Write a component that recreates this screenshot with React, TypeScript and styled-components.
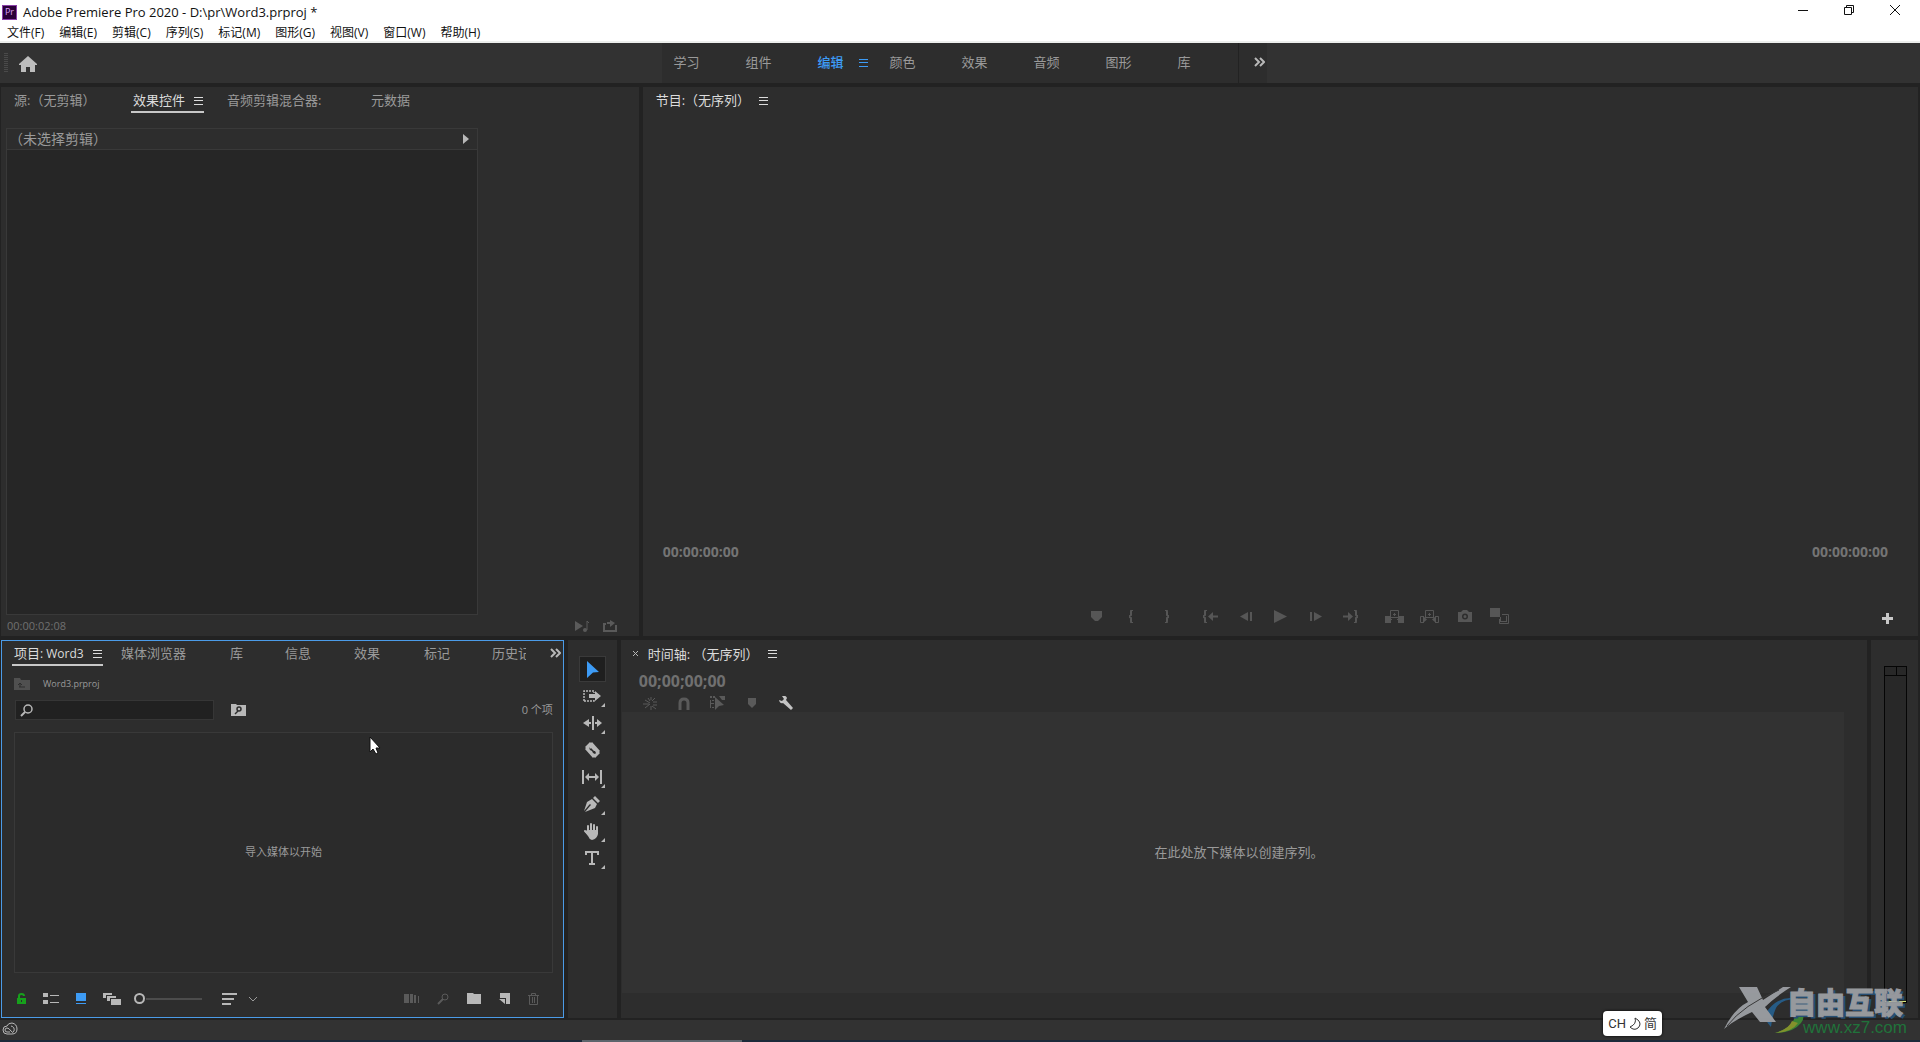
import React from "react";
import styled, { createGlobalStyle, css } from "styled-components";

const c = {
  panel: "#2d2d2d",
  gap: "#222222",
  bar: "#323232",
  line: "#393939",
  text: "#9a9a9a",
  bright: "#dcdcdc",
  icon: "#b8b8b8",
  dim: "#5a5a5a",
  blue: "#3d9bf5",
};

const GlobalStyle = createGlobalStyle`
  * { box-sizing: border-box; }
  body { margin: 0; background: ${c.gap}; overflow: hidden; }
  body, button, input { font-family: "Open Sans", "Noto Sans CJK SC", sans-serif; }
  button { border: 0; padding: 0; background: none; color: inherit; font-size: inherit; line-height: inherit; }
  svg { display: block; flex: none; }
`;

const Window = styled.div`
  display: flex;
  flex-direction: column;
  height: 100vh;
  color: ${c.text};
  font-size: 13px;
  line-height: 20px;
`;

/* ---------- window chrome ---------- */
const Chrome = styled.header`
  flex: none;
  background: #fff;
  color: #111;
  border-bottom: 2px solid #eceeec;
`;
const TitleBar = styled.div`
  display: flex;
  align-items: center;
  height: 24px;
  padding: 0 2px;
  gap: 6px;
`;
const AppBadge = styled.span`
  display: grid;
  place-items: center;
  width: 15px;
  height: 15px;
  background: #2a0038;
  border: 1px solid #8a3fa8;
  color: #d9a0f5;
  font-size: 9px;
  line-height: 12px;
`;
const Title = styled.h1`
  margin: 0;
  flex: 1;
  font-size: 13px;
  font-weight: 400;
  line-height: 20px;
`;
const WindowButtons = styled.div`
  display: flex;
  margin-top: -4px;
`;
const WindowButton = styled.button`
  display: grid;
  place-items: center;
  width: 46px;
  height: 20px;
`;
const MenuBar = styled.nav`
  display: flex;
  gap: 15px;
  height: 17px;
  padding-left: 7px;
  font-size: 12px;
  line-height: 17px;
`;
const MenuItem = styled.button`
  white-space: nowrap;
`;

/* ---------- workspace bar ---------- */
const WorkspaceBar = styled.div`
  display: flex;
  flex: none;
  align-items: stretch;
  height: 40px;
  background: ${c.bar};
`;
const HomeArea = styled.div`
  display: flex;
  align-items: center;
  flex: 660 1 0;
  gap: 11px;
  padding-left: 4px;
`;
const Grip = styled.span`
  width: 4px;
  height: 20px;
  background: repeating-linear-gradient(#4a4a4a 0 1px, transparent 1px 2px);
`;
const HomeButton = styled.button`
  padding-top: 1px;
`;
const Workspaces = styled.div`
  display: flex;
  flex: none;
  padding-left: 12px;
  background: ${c.panel};
`;
const Workspace = styled.button<{ $active?: boolean; $width?: number }>`
  display: flex;
  align-items: center;
  gap: 15px;
  width: ${(p) => p.$width || 72}px;
  height: 38px;
  color: ${(p) => (p.$active ? c.blue : c.text)};
  font-weight: ${(p) => (p.$active ? 500 : 400)};
`;
const MoreWorkspaces = styled.button`
  display: grid;
  place-items: center;
  width: 29px;
  height: 40px;
  padding: 0 0 2px 14px;
  border-left: 1px solid ${c.gap};
  color: ${c.icon};
`;
const BarRest = styled.div`
  flex: 656 1 0;
`;

/* ---------- panels ---------- */
const Main = styled.main`
  display: grid;
  flex: 1;
  min-height: 0;
  grid-template-rows: minmax(0, 16fr) minmax(0, 11fr);
  gap: 4px;
  padding: 4px 2px 2px 1px;
`;
const TopRow = styled.div`
  display: grid;
  min-height: 0;
  grid-template-columns: minmax(0, 1fr) minmax(0, 2fr);
  gap: 4px;
`;
const BottomRow = styled.div`
  display: grid;
  min-height: 0;
  grid-template-columns: minmax(0, 14fr) 49px minmax(0, 31fr) 47px;
  gap: 4px;
`;
const Panel = styled.section<{ $focused?: boolean }>`
  display: flex;
  flex-direction: column;
  min-width: 0;
  min-height: 0;
  background: ${c.panel};
  ${(p) =>
    p.$focused &&
    css`
      outline: 1px solid #4b9be8;
      outline-offset: -1px;
    `}
`;
const TabBar = styled.div`
  display: flex;
  flex: none;
  height: 26px;
  padding-left: 11px;
`;
const TabList = styled.div`
  display: flex;
  flex: 1;
  min-width: 0;
  overflow: hidden;
`;
const TabSlot = styled.div<{ $width?: number }>`
  flex: none;
  width: ${(p) => (p.$width ? `${p.$width}px` : "auto")};
`;
const TabButton = styled.button<{ $active?: boolean; $underline?: boolean }>`
  display: flex;
  align-items: center;
  gap: 9px;
  height: 26px;
  padding: 2px 1px 0 2px;
  border-bottom: 2px solid ${(p) => (p.$underline ? "#c8c8c8" : "transparent")};
  color: ${(p) => (p.$active ? c.bright : c.text)};
  white-space: nowrap;
`;
const Latin = styled.span`
  font-size: 12px;
`;
const MoreTabs = styled.button`
  width: 38px;
  padding: 0 4px 0 24px;
  color: ${c.icon};
`;

/* effect controls */
const EffectBox = styled.div`
  display: flex;
  flex: 1;
  flex-direction: column;
  width: 74%;
  margin: 15px 0 0 5px;
  border: 1px solid ${c.line};
  background: #262626;
`;
const EffectHeader = styled.div`
  display: flex;
  align-items: center;
  justify-content: space-between;
  height: 21px;
  padding: 0 8px 0 2px;
  border-bottom: 1px solid ${c.line};
  background: ${c.panel};
  font-size: 14px;
`;
const EffectFooter = styled.div`
  display: flex;
  align-items: center;
  height: 21px;
  padding: 1px 22px 0 6px;
  gap: 14px;
  color: #707070;
  font-size: 11px;
`;
const Fill = styled.span`
  flex: 1;
`;
const IconButton = styled.button<{ $tone?: string }>`
  display: grid;
  flex: none;
  place-items: center;
  color: ${(p) => p.$tone || c.icon};
`;

/* program monitor */
const Timecodes = styled.div`
  display: flex;
  justify-content: space-between;
  margin-top: auto;
  padding: 0 30px 0 20px;
  color: #747474;
  font-size: 14px;
  font-weight: 700;
`;
const Transport = styled.div`
  display: grid;
  grid-template-columns: 1fr auto 1fr;
  align-items: center;
  height: 20px;
  margin: 44px 0 10px;
  padding-left: 36px;
  color: #565656;
`;
const TransportGroups = styled.div`
  display: flex;
  grid-column: 2;
  gap: 9px;
  padding-bottom: 2px;
`;
const TransportGroup = styled.div`
  display: flex;
`;
const TransportButton = styled.button`
  display: grid;
  place-items: center;
  width: 35px;
  height: 20px;
`;
const AddButton = styled.button`
  justify-self: end;
  padding: 2px 25px 0 0;
  color: #c8c8c8;
`;

/* project */
const PathRow = styled.div`
  display: flex;
  align-items: center;
  height: 20px;
  gap: 13px;
  margin-top: 8px;
  padding-left: 13px;
  font-size: 9px;
`;
const SearchRow = styled.div`
  display: flex;
  align-items: center;
  height: 20px;
  margin-top: 6px;
  padding: 0 11px 0 14px;
  font-size: 11px;
`;
const SearchBox = styled.label`
  display: flex;
  align-items: center;
  gap: 6px;
  width: 199px;
  height: 20px;
  margin-right: 17px;
  padding-left: 4px;
  border: 1px solid #363636;
  background: #212121;
  color: ${c.icon};
`;
const SearchInput = styled.input`
  flex: 1;
  min-width: 0;
  border: 0;
  outline: 0;
  background: transparent;
  color: ${c.bright};
  font-size: 12px;
`;
const MediaArea = styled.div`
  display: grid;
  flex: 1;
  place-items: center;
  margin: 12px 11px 0 13px;
  padding-bottom: 2px;
  border: 1px solid ${c.line};
  background: #2b2b2b;
  font-size: 11px;
`;
const ProjectFooter = styled.div`
  display: flex;
  flex: none;
  align-items: center;
  justify-content: space-between;
  height: 45px;
  padding: 7px 25px 0 15px;
`;
const FooterGroup = styled.div<{ $gap: number }>`
  display: flex;
  align-items: center;
  gap: ${(p) => p.$gap}px;
`;
const ZoomSlider = styled.input`
  width: 70px;
  height: 12px;
  margin: 0;
  appearance: none;
  background: linear-gradient(#4c4c4c, #4c4c4c) 12px 5px / 56px 2px no-repeat;
  &::-webkit-slider-thumb {
    appearance: none;
    width: 11px;
    height: 11px;
    border: 2px solid ${c.icon};
    border-radius: 50%;
    background: ${c.panel};
  }
`;

/* tools */
const ToolList = styled.div`
  display: flex;
  flex-direction: column;
  align-items: center;
  gap: 1px;
  padding-top: 16px;
`;
const ToolButton = styled.button<{ $active?: boolean; $more?: boolean }>`
  position: relative;
  display: grid;
  place-items: center;
  width: 27px;
  height: 26px;
  color: ${(p) => (p.$active ? c.blue : c.icon)};
  background: ${(p) => (p.$active ? "#1f1f1f" : "transparent")};
  border: 1px solid ${(p) => (p.$active ? "#3a3a3a" : "transparent")};
  ${(p) =>
    p.$more &&
    css`
      &::after {
        content: "";
        position: absolute;
        right: 0;
        bottom: 1px;
        border: 2px solid;
        border-color: transparent ${c.icon} ${c.icon} transparent;
      }
    `}
`;

/* timeline */
const TimelineHead = styled.div`
  display: flex;
  align-items: center;
  height: 26px;
  padding: 1px 0 0 11px;
  gap: 9px;
  color: ${c.bright};
`;
const TimelineCode = styled.div`
  height: 30px;
  padding-left: 18px;
  color: #707070;
  font-size: 16px;
  font-weight: 700;
  line-height: 30px;
`;
const TimelineTools = styled.div`
  display: flex;
  gap: 18px;
  height: 14px;
  padding-left: 21px;
`;
const TimelineTool = styled.button<{ $on?: boolean }>`
  display: grid;
  place-items: center;
  width: 16px;
  height: 14px;
  color: ${(p) => (p.$on ? "#c4c4c4" : c.dim)};
`;
const DropArea = styled.div`
  display: grid;
  flex: 1;
  place-items: center;
  margin: 2px 23px 25px 1px;
  padding: 0 0 2px 12px;
  background: ${c.bar};
`;

/* meters */
const Meter = styled.div`
  display: flex;
  flex: 1;
  flex-direction: column;
  margin: 26px 11px 15px 13px;
  border: 1px solid #050505;
  background: #282828;
`;
const MeterClip = styled.div`
  display: grid;
  grid-template-columns: 1fr 1fr;
  height: 9px;
  border-bottom: 1px solid #050505;
`;
const ClipLamp = styled.span`
  & + & {
    border-left: 1px solid #050505;
  }
`;
const MeterFloor = styled.span`
  height: 1px;
  margin-top: auto;
  background: #d8e878;
`;

/* status bar */
const StatusBar = styled.footer`
  flex: none;
  height: 22px;
  padding: 2px 0 0 2px;
  background: ${c.bar};
  border-bottom: 2px solid #1c2a3a;
  color: ${c.icon};
`;
const TaskIndicator = styled.span`
  position: absolute;
  left: 582px;
  bottom: 0;
  width: 160px;
  height: 2px;
  background: #5c656c;
`;

/* overlays */
const Pointer = styled.div`
  position: absolute;
  left: 369px;
  top: 736px;
`;
const ImeBadge = styled.div`
  position: absolute;
  right: 258px;
  bottom: 6px;
  display: flex;
  align-items: center;
  gap: 3px;
  height: 25px;
  padding: 0 5px;
  border-radius: 4px;
  background: #fff;
  box-shadow: 0 0 3px #000;
  color: #333;
  font-family: Roboto, "Noto Sans CJK SC", sans-serif;
  font-size: 13px;
`;
const Watermark = styled.div`
  position: absolute;
  right: 13px;
  bottom: 6px;
  display: flex;
  align-items: center;
  opacity: 0.9;
`;
const WatermarkMark = styled.div`
  margin-right: -20px;
`;
const WatermarkText = styled.div`
  display: flex;
  flex-direction: column;
  align-items: flex-end;
`;
const WatermarkName = styled.span`
  padding-right: 4px;
  color: #a2a5aa;
  font-family: "Noto Sans CJK SC", sans-serif;
  font-size: 29px;
  font-weight: 900;
  line-height: 36px;
  -webkit-text-stroke: 1px #a2a5aa;
  text-shadow: 3px 2px 0 #26527a;
`;
const WatermarkUrl = styled.span`
  color: #1f7a3c;
  font-family: "Liberation Sans", sans-serif;
  font-size: 17px;
  line-height: 17px;
`;

/* ---------- icons ---------- */
type IconProps = { w: number; h: number; children: React.ReactNode };
const Icon = ({ w, h, children }: IconProps) => (
  <svg width={w} height={h} viewBox={`0 0 ${w} ${h}`} fill="currentColor" aria-hidden="true">
    {children}
  </svg>
);
const stroke = (width = 1) => ({ fill: "none", stroke: "currentColor", strokeWidth: width });

const MenuLines = () => (
  <Icon w={9} h={9}>
    <path d="M0 1h9v1H0zM0 4h9v1H0zM0 8h9v1H0z" />
  </Icon>
);
const Chevrons = () => (
  <Icon w={11} h={10}>
    <path d="M1 1l4 4-4 4M6 1l4 4-4 4" {...stroke(2)} />
  </Icon>
);
const brace = "M4 0H3Q2 0 2 2v3L0 6.500 2 8v3q0 2 1 2h1";

const transport: { label: string; icon: React.ReactNode }[][] = [
  [
    { label: "添加标记", icon: <Icon w={11} h={12}><path d="M0 1h11v6l-4 4H4L0 7z" /></Icon> },
    { label: "标记入点", icon: <Icon w={5} h={13}><path d={brace} {...stroke(2)} /></Icon> },
    { label: "标记出点", icon: <Icon w={5} h={13}><path d="M1 0h1q1 0 1 2v3l2 1.500L3 8v3q0 2-1 2H1" {...stroke(2)} /></Icon> },
  ],
  [
    { label: "转到入点", icon: <Icon w={15} h={13}><path d={brace} {...stroke(2)} /><path d="M5 6.500L10 2v3.500h5v2h-5V11z" /></Icon> },
    { label: "后退一帧", icon: <Icon w={12} h={11}><path d="M0 5.500L8 1v9zM10 1h2v9h-2z" /></Icon> },
    { label: "播放", icon: <Icon w={13} h={13}><path d="M0 0l13 6.500L0 13z" /></Icon> },
    { label: "前进一帧", icon: <Icon w={12} h={11}><path d="M12 5.500L4 1v9zM0 1h2v9H0z" /></Icon> },
    { label: "转到出点", icon: <Icon w={15} h={13}><path d="M11 0h1q1 0 1 2v3l2 1.500L13 8v3q0 2-1 2h-1" {...stroke(2)} /><path d="M10 6.500L5 2v3.500H0v2h5V11z" /></Icon> },
  ],
  [
    { label: "提升", icon: <Icon w={19} h={13}><path d="M0 6h6v7H0zM13 6h6v7h-6zM5 9h2v1H5zM12 9h2v1h-2zM8 4h3v1H8zM9 3h1v3H9z" /><path d="M5.500 8V.5h8V8M6 7.500h7" {...stroke()} /></Icon> },
    { label: "提取", icon: <Icon w={19} h={13}><path d="M4 6.500H.5v6H4M15 6.500h3.500v6H15M5.500 8V.5h8V8M6 7.500h7" {...stroke()} /><path d="M3 6l4 3.500L3 13zM16 6l-4 3.500 4 3.500zM8 4h3v1H8zM9 3h1v3H9z" /></Icon> },
    { label: "导出帧", icon: <Icon w={14} h={12}><path fillRule="evenodd" d="M0 2h3l2-2h4l2 2h3v10H0zM7 3.500a3 3 0 100 6 3 3 0 000-6zM7 5a1.500 1.500 0 110 3 1.500 1.500 0 010-3z" /></Icon> },
    { label: "比较视图", icon: <Icon w={19} h={16}><path d="M0 0h10v9H0z" /><path d="M12 6.500h6.500v9h-9V11" {...stroke()} /><path d="M10 9h1v5H9v-3h1zM11 13h6v1h-6zM16 8h1v5h-1z" /></Icon> },
  ],
];

const tools: { label: string; more?: boolean; icon: React.ReactNode }[] = [
  { label: "选择工具", icon: <Icon w={13} h={17}><path d="M1 0l12 11-6 .500L1 17z" /></Icon> },
  { label: "向前选择轨道工具", more: true, icon: <Icon w={18} h={12}><path d="M1 11V1h10v2M1 11h10V9" {...stroke(1.5)} strokeDasharray="2 1" /><path d="M6 4h6V1l6 5-6 5V8H6z" /></Icon> },
  { label: "波纹编辑工具", more: true, icon: <Icon w={19} h={14}><path d="M9 0h2v14H9zM0 7l6-4v3h2v2H6v3zM19 7l-5-4v3h-2v2h2v3z" /></Icon> },
  { label: "剃刀工具", icon: <Icon w={16} h={16}><path fillRule="evenodd" d="M6 0l1 1 1-1 8 9-1 1 1 1-5 5-1-1-1 1-8-9 1-1-1-1zM5 5l1 2 1-1 3 3 1 0 1 2-1 1-2-1-1-2-2-1-1-2z" /></Icon> },
  { label: "外滑工具", more: true, icon: <Icon w={20} h={14}><path d="M0 0h2v14H0zM18 0h2v14h-2zM3 7l4-4v3h6V3l4 4-4 4V8H7v3z" /></Icon> },
  { label: "钢笔工具", more: true, icon: <Icon w={16} h={16}><path d="M11 0l5 5-2 2-5-5zM8 3l5 5-2 4-10 4 5-6 1-1-1-1-1 1-5 6 3-9z" /></Icon> },
  { label: "手形工具", more: true, icon: <Icon w={16} h={17}><path d="M4 9V3M7 8V1M10 8V2M13 9V4M1 8l4 4" {...stroke(2)} strokeLinecap="round" /><path d="M3 7h11v4q-1 5-6 6-3-1-4-4L1 9z" /></Icon> },
  { label: "文字工具", more: true, icon: <Icon w={14} h={14}><path d="M0 0h14v4h-2V2H8v10h2v2H4v-2h2V2H2v2H0z" /></Icon> },
];

const menus = ["文件(F)", "编辑(E)", "剪辑(C)", "序列(S)", "标记(M)", "图形(G)", "视图(V)", "窗口(W)", "帮助(H)"];
const workspaces = ["学习", "组件", "编辑", "颜色", "效果", "音频", "图形"];

type TabDef = { label: string; latin?: string; width?: number; active?: boolean };
const sourceTabs: TabDef[] = [
  { label: "源:（无剪辑）", width: 119 },
  { label: "效果控件", width: 94, active: true },
  { label: "音频剪辑混合器:", width: 144 },
  { label: "元数据" },
];
const projectTabs: TabDef[] = [
  { label: "项目", latin: ": Word3", width: 107, active: true },
  { label: "媒体浏览器", width: 109 },
  { label: "库", width: 55 },
  { label: "信息", width: 69 },
  { label: "效果", width: 70 },
  { label: "标记", width: 68 },
  { label: "历史记录" },
];

const Tabs = ({ tabs }: { tabs: TabDef[] }) => (
  <TabList>
    {tabs.map((t) => (
      <TabSlot key={t.label} $width={t.width}>
        <TabButton $active={t.active} $underline={t.active}>
          <span>
            {t.label}
            {t.latin && <Latin>{t.latin}</Latin>}
          </span>
          {t.active && <MenuLines />}
        </TabButton>
      </TabSlot>
    ))}
  </TabList>
);

export default function App() {
  return (
    <Window>
      <GlobalStyle />
      <Chrome>
        <TitleBar>
          <AppBadge>Pr</AppBadge>
          <Title>Adobe Premiere Pro 2020 - D:\pr\Word3.prproj *</Title>
          <WindowButtons>
            <WindowButton aria-label="最小化"><Icon w={10} h={10}><path d="M0 5h10v1H0z" /></Icon></WindowButton>
            <WindowButton aria-label="还原"><Icon w={10} h={10}><path d="M.5 2.500h7v7h-7zM2.500 2.500v-2h7v7h-2" {...stroke()} /></Icon></WindowButton>
            <WindowButton aria-label="关闭"><Icon w={10} h={10}><path d="M0 0l10 10M10 0L0 10" {...stroke()} /></Icon></WindowButton>
          </WindowButtons>
        </TitleBar>
        <MenuBar>
          {menus.map((m) => <MenuItem key={m}>{m}</MenuItem>)}
        </MenuBar>
      </Chrome>

      <WorkspaceBar>
        <HomeArea>
          <Grip />
          <HomeButton aria-label="主页">
            <Icon w={18} h={16}><path d="M9 0l9 8v1h-2v7h-5v-5H7v5H2V9H0V8z" fill="#bdbdbd" /></Icon>
          </HomeButton>
        </HomeArea>
        <Workspaces>
          {workspaces.map((w) => (
            <Workspace key={w} $active={w === "编辑"}>
              {w}
              {w === "编辑" && <MenuLines />}
            </Workspace>
          ))}
          <Workspace $width={60}>库</Workspace>
          <MoreWorkspaces aria-label="更多工作区"><Chevrons /></MoreWorkspaces>
        </Workspaces>
        <BarRest />
      </WorkspaceBar>

      <Main>
        <TopRow>
          <Panel>
            <TabBar><Tabs tabs={sourceTabs} /></TabBar>
            <EffectBox>
              <EffectHeader>
                （未选择剪辑）
                <IconButton aria-label="显示时间轴"><Icon w={6} h={10}><path d="M0 0l6 5-6 5z" /></Icon></IconButton>
              </EffectHeader>
            </EffectBox>
            <EffectFooter>
              00:00:02:08
              <Fill />
              <IconButton $tone={c.dim} aria-label="仅播放音频"><Icon w={14} h={12}><path d="M0 1l8 5-8 5z" /><path d="M12 10V1l2 2" {...stroke()} /><circle cx="10" cy="10" r="2" /></Icon></IconButton>
              <IconButton $tone={c.dim} aria-label="循环播放"><Icon w={14} h={12}><path d="M3 4H1v7h12V5M4 3h4" {...stroke(2)} /><path d="M7 0l5 3-5 4z" /></Icon></IconButton>
            </EffectFooter>
          </Panel>

          <Panel>
            <TabBar>
              <TabButton $active>节目:（无序列）<MenuLines /></TabButton>
            </TabBar>
            <Timecodes><span>00:00:00:00</span><span>00:00:00:00</span></Timecodes>
            <Transport>
              <TransportGroups>
                {transport.map((group, i) => (
                  <TransportGroup key={i}>
                    {group.map((b) => <TransportButton key={b.label} aria-label={b.label}>{b.icon}</TransportButton>)}
                  </TransportGroup>
                ))}
              </TransportGroups>
              <AddButton aria-label="按钮编辑器"><Icon w={11} h={11}><path d="M4 0h3v4h4v3H7v4H4V7H0V4h4z" /></Icon></AddButton>
            </Transport>
          </Panel>
        </TopRow>

        <BottomRow>
          <Panel $focused>
            <TabBar>
              <Tabs tabs={projectTabs} />
              <MoreTabs aria-label="更多面板"><Chevrons /></MoreTabs>
            </TabBar>
            <PathRow>
              <Icon w={16} h={12}><path d="M0 0h6l1 2h9v10H0z" fill="#505050" /><path d="M5 9h6M6 9V5M4 7l2-2 2 2" fill="none" stroke="#2d2d2d" /></Icon>
              Word3.prproj
            </PathRow>
            <SearchRow>
              <SearchBox>
                <Icon w={13} h={13}><circle cx="8" cy="5" r="4" {...stroke(1.5)} /><path d="M5 8l-4 4" {...stroke(2)} /></Icon>
                <SearchInput aria-label="搜索项目" />
              </SearchBox>
              <IconButton aria-label="从查询创建新的搜索素材箱">
                <Icon w={15} h={12}><path d="M0 0h5l1 1h9v11H0z" /><circle cx="8" cy="5" r="2" fill="none" stroke="#2d2d2d" strokeWidth="1.500" /><path d="M7 7l-3 3" stroke="#2d2d2d" strokeWidth="1.500" /></Icon>
              </IconButton>
              <Fill />
              0 个项
            </SearchRow>
            <MediaArea>导入媒体以开始</MediaArea>
            <ProjectFooter>
              <FooterGroup $gap={17}>
                <IconButton $tone="#17a01c" aria-label="项目可写"><Icon w={10} h={11}><path fillRule="evenodd" d="M1 5h9v6H1zM5 7h1v2H5z" /><path d="M3 5V3q0-2 2.500-2T8 3" {...stroke(2)} /></Icon></IconButton>
                <IconButton aria-label="列表视图"><Icon w={16} h={11}><path d="M0 0h5v4H0zM0 7h5v4H0zM7 2h9v1H7zM7 9h9v1H7z" /></Icon></IconButton>
                <IconButton $tone={c.blue} aria-label="图标视图"><Icon w={10} h={11}><path d="M0 0h10v8H0zM0 10h10v1H0z" /></Icon></IconButton>
                <FooterGroup $gap={13}>
                  <IconButton aria-label="自由变换视图"><Icon w={18} h={12}><path d="M0 0h9v2H3v3H0zM4 3h9v2H7v3H4zM8 6h10v6H8z" /></Icon></IconButton>
                  <FooterGroup $gap={18}>
                    <ZoomSlider type="range" min={0} max={100} defaultValue={0} aria-label="缩放" />
                    <FooterGroup $gap={12}>
                      <IconButton aria-label="排序图标"><Icon w={15} h={12}><path d="M0 0h15v2H0zM0 5h12v2H0zM0 10h9v2H0z" /></Icon></IconButton>
                      <Icon w={8} h={6}><path d="M0 1l4 4 4-4" {...stroke()} /></Icon>
                    </FooterGroup>
                  </FooterGroup>
                </FooterGroup>
              </FooterGroup>
              <FooterGroup $gap={18}>
                <IconButton $tone={c.dim} aria-label="自动匹配序列"><Icon w={15} h={9}><path d="M0 0h5v9H0zM6 0h3v9H6zM10 1h2v8h-2zM14 2h1v7h-1z" /></Icon></IconButton>
                <IconButton $tone={c.dim} aria-label="查找"><Icon w={12} h={12}><circle cx="8" cy="4" r="3" {...stroke(1)} /><path d="M6 6l-5 5" {...stroke(2)} /></Icon></IconButton>
                <IconButton aria-label="新建素材箱"><Icon w={14} h={11}><path d="M0 0h6l1 1h7v10H0z" /></Icon></IconButton>
                <IconButton aria-label="新建项"><Icon w={11} h={11}><path d="M1 0h10v11H7V5H1zM0 6h6v5z" /></Icon></IconButton>
                <IconButton $tone={c.dim} aria-label="清除"><Icon w={11} h={12}><path d="M0 2.500h11M3.500 2V.5h4V2M1.500 3v8.500h8V3M4.500 4v6M6.500 4v6" {...stroke()} /></Icon></IconButton>
              </FooterGroup>
            </ProjectFooter>
          </Panel>

          <Panel>
            <ToolList>
              {tools.map((t, i) => (
                <ToolButton key={t.label} aria-label={t.label} $active={i === 0} $more={t.more}>{t.icon}</ToolButton>
              ))}
            </ToolList>
          </Panel>

          <Panel>
            <TimelineHead>
              <IconButton aria-label="关闭面板"><Icon w={7} h={7}><path d="M1 1l5 5M6 1L1 6" {...stroke()} /></Icon></IconButton>
              <span>时间轴: （无序列）</span>
              <IconButton $tone={c.bright} aria-label="面板菜单"><MenuLines /></IconButton>
            </TimelineHead>
            <TimelineCode>00;00;00;00</TimelineCode>
            <TimelineTools>
              <TimelineTool aria-label="嵌套序列"><Icon w={14} h={14}><path d="M0 8h6M2 4l5 3M2 12l5-4M8 1v3M8 10v4M10 6h4M10 9h4M5 2l2 3M12 2l-3 3M9 10l4 3" {...stroke()} /></Icon></TimelineTool>
              <TimelineTool aria-label="对齐"><Icon w={12} h={13}><path d="M2 13V6q0-4 4-4t4 4v7" {...stroke(3)} /></Icon></TimelineTool>
              <TimelineTool aria-label="链接选择项"><Icon w={15} h={14}><path d="M0 0h2v2H0zM3 0h2v2H3zM0 4h1v8H0zM2 4h2v1H2zM2 11h2v1H2zM0 7h4v1H0zM9 0h6v4h-3zM5 1l9 8-5 1-4 4z" /></Icon></TimelineTool>
              <TimelineTool aria-label="添加标记"><Icon w={8} h={10}><path d="M0 0h8v6l-4 4-4-4z" /></Icon></TimelineTool>
              <TimelineTool $on aria-label="时间轴显示设置"><Icon w={14} h={14}><path d="M3 0q4-1 5 2l-1 2 7 8-2 2-8-7q-3 1-4-3l3 1 2-2z" /></Icon></TimelineTool>
            </TimelineTools>
            <DropArea>在此处放下媒体以创建序列。</DropArea>
          </Panel>

          <Panel>
            <Meter>
              <MeterClip><ClipLamp /><ClipLamp /></MeterClip>
              <MeterFloor />
            </Meter>
          </Panel>
        </BottomRow>
      </Main>

      <StatusBar>
        <Icon w={16} h={13}>
          <path d="M5 12q-4 0-4-4t4-4q1-3 5-3 5 1 5 6 0 5-5 5z" {...stroke()} />
          <path d="M8 10H5q-2 0-2-2t2-2q2 0 4 3t3 0q1-4-3-5" {...stroke()} />
        </Icon>
        <TaskIndicator />
      </StatusBar>

      <Pointer>
        <Icon w={12} h={19}><path d="M1 1v15l3-3 3 5 2-1-2-5h4z" fill="#fff" stroke="#111" /></Icon>
      </Pointer>
      <ImeBadge>
        <span>CH</span>
        <Icon w={12} h={14}><path d="M6 1q2 6-5 9 4 4 8 1 4-4 0-8z" {...stroke()} /></Icon>
        <span>简</span>
      </ImeBadge>
      <Watermark>
        <WatermarkMark>
          <Icon w={84} h={50}>
            <path d="M48 42q-12-12 4-24 10-7 22-4-16 0-21 9-4 9-5 19z" fill="#26608f" />
            <path d="M76 22q8 8 2 16-8 10-26 10 18-6 19-14z" fill="#3c8c35" />
            <path d="M52 48q14-4 17-12l6 2q-6 9-23 10z" fill="#8c9c2c" />
            <path d="M16 2h18l6 13L60 2h8Q52 12 42 22l11 15H37l-8-10Q10 36 1 44q10-20 24-27z" fill="#a2a5aa" />
            <path d="M56 5Q20 20 4 41" fill="none" stroke="#3a3a3a" />
          </Icon>
        </WatermarkMark>
        <WatermarkText>
          <WatermarkName>自由互联</WatermarkName>
          <WatermarkUrl>www.xz7.com</WatermarkUrl>
        </WatermarkText>
      </Watermark>
    </Window>
  );
}
